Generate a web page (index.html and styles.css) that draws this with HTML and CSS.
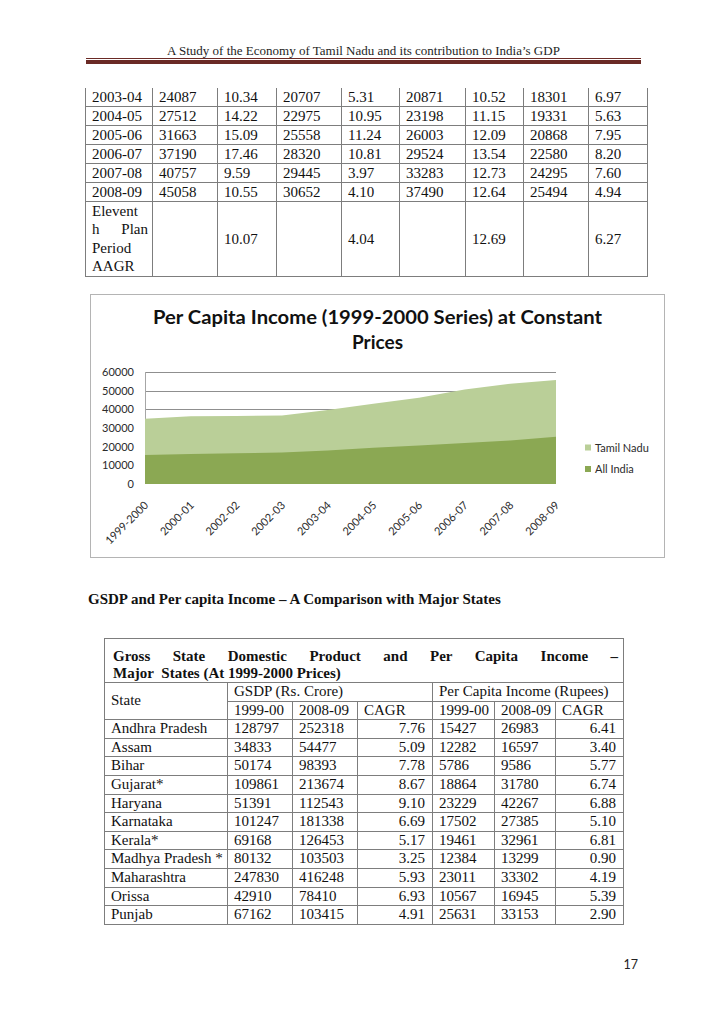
FILE: index.html
```html
<!DOCTYPE html>
<html lang="en">
<head>
<meta charset="utf-8">
<title>A Study of the Economy of Tamil Nadu - page 17</title>
<link rel="stylesheet" href="styles.css">
</head>
<body>
<div class="page">
  <header class="running-head">
    <div class="running-title">A Study of the Economy of Tamil Nadu and its contribution to India’s GDP</div>
    <div class="rule"></div>
  </header>

  <table class="growth">
    <colgroup>
      <col class="g1"><col class="g2"><col class="g3"><col class="g4"><col class="g5"><col class="g6"><col class="g7"><col class="g8"><col class="g9">
    </colgroup>
    <tbody>
      <tr><td>2003-04</td><td>24087</td><td>10.34</td><td>20707</td><td>5.31</td><td>20871</td><td>10.52</td><td>18301</td><td>6.97</td></tr>
      <tr><td>2004-05</td><td>27512</td><td>14.22</td><td>22975</td><td>10.95</td><td>23198</td><td>11.15</td><td>19331</td><td>5.63</td></tr>
      <tr><td>2005-06</td><td>31663</td><td>15.09</td><td>25558</td><td>11.24</td><td>26003</td><td>12.09</td><td>20868</td><td>7.95</td></tr>
      <tr><td>2006-07</td><td>37190</td><td>17.46</td><td>28320</td><td>10.81</td><td>29524</td><td>13.54</td><td>22580</td><td>8.20</td></tr>
      <tr><td>2007-08</td><td>40757</td><td>9.59</td><td>29445</td><td>3.97</td><td>33283</td><td>12.73</td><td>24295</td><td>7.60</td></tr>
      <tr><td>2008-09</td><td>45058</td><td>10.55</td><td>30652</td><td>4.10</td><td>37490</td><td>12.64</td><td>25494</td><td>4.94</td></tr>
      <tr class="plan-row">
        <td class="plan-label"><span class="pl">Elevent</span><span class="pl pl-just">h Plan</span><span class="pl">Period</span><span class="pl">AAGR</span></td>
        <td></td><td>10.07</td><td></td><td>4.04</td><td></td><td>12.69</td><td></td><td>6.27</td>
      </tr>
    </tbody>
  </table>

  <figure class="chart">
    <svg class="chart-svg" width="575" height="264" viewBox="0 0 575 264" xmlns="http://www.w3.org/2000/svg">
      <rect x="0.5" y="0.5" width="574" height="263" fill="#ffffff" stroke="#b4b4b4" stroke-width="1"/>
      <text class="c-title" x="287.5" y="30.3" text-anchor="middle" textLength="449" lengthAdjust="spacingAndGlyphs">Per Capita Income (1999-2000 Series) at Constant</text>
      <text class="c-title" x="287.5" y="55.3" text-anchor="middle">Prices</text>

      <g stroke="#8f8f8f" stroke-width="1">
        <line x1="55" y1="78.5" x2="466" y2="78.5"/>
        <line x1="55" y1="97.5" x2="466" y2="97.5"/>
        <line x1="55" y1="115.5" x2="466" y2="115.5"/>
        <line x1="55" y1="134.5" x2="466" y2="134.5"/>
        <line x1="55" y1="152.5" x2="466" y2="152.5"/>
        <line x1="55" y1="171.5" x2="466" y2="171.5"/>
      </g>
      <line x1="55.5" y1="78" x2="55.5" y2="190" stroke="#a6a6a6" stroke-width="1"/>

      <polygon fill="#bacf98" points="55,190 55,124.7 100.7,122.2 146.3,121.9 192,121.5 237.7,115.9 283.3,109.7 329,103.8 374.7,95.4 420.3,89.8 466,86 466,190"/>
      <polygon fill="#8ba853" points="55,190 55,161.1 100.7,160.1 146.3,159.2 192,158.5 237.7,156.4 283.3,153.8 329,151.5 374.7,148.9 420.3,146.5 466,142.8 466,190"/>

      <g class="c-axis" text-anchor="end">
        <text x="44" y="82">60000</text>
        <text x="44" y="100.7">50000</text>
        <text x="44" y="119.3">40000</text>
        <text x="44" y="138">30000</text>
        <text x="44" y="156.7">20000</text>
        <text x="44" y="175.3">10000</text>
        <text x="44" y="194">0</text>
      </g>

      <g class="c-axis" text-anchor="end">
        <text transform="translate(59,212) rotate(-45)">1999-2000</text>
        <text transform="translate(104.7,212) rotate(-45)">2000-01</text>
        <text transform="translate(150.3,212) rotate(-45)">2002-02</text>
        <text transform="translate(196,212) rotate(-45)">2002-03</text>
        <text transform="translate(241.7,212) rotate(-45)">2003-04</text>
        <text transform="translate(287.3,212) rotate(-45)">2004-05</text>
        <text transform="translate(333,212) rotate(-45)">2005-06</text>
        <text transform="translate(378.7,212) rotate(-45)">2006-07</text>
        <text transform="translate(424.3,212) rotate(-45)">2007-08</text>
        <text transform="translate(470,212) rotate(-45)">2008-09</text>
      </g>

      <rect x="495" y="150.5" width="6" height="6" fill="#bacf98"/>
      <text class="c-axis" x="505" y="157.6">Tamil Nadu</text>
      <rect x="495" y="172" width="6" height="6" fill="#8ba853"/>
      <text class="c-axis" x="505" y="179">All India</text>
    </svg>
  </figure>

  <h2 class="section-title">GSDP and Per capita Income – A Comparison with Major States</h2>

  <table class="states">
    <colgroup>
      <col class="s1"><col class="s2"><col class="s3"><col class="s4"><col class="s5"><col class="s6"><col class="s7">
    </colgroup>
    <tbody>
      <tr>
        <th colspan="7" class="caption-cell">
          <span class="cap-line1">Gross State Domestic Product and Per Capita Income –</span>
          <span class="cap-line2">Major&nbsp; States (At 1999-2000 Prices)</span>
        </th>
      </tr>
      <tr><td rowspan="2" class="mid">State</td><td colspan="3">GSDP (Rs. Crore)</td><td colspan="3">Per Capita Income (Rupees)</td></tr>
      <tr><td>1999-00</td><td>2008-09</td><td>CAGR</td><td>1999-00</td><td>2008-09</td><td>CAGR</td></tr>
      <tr><td>Andhra Pradesh</td><td>128797</td><td>252318</td><td class="num">7.76</td><td>15427</td><td>26983</td><td class="num">6.41</td></tr>
      <tr><td>Assam</td><td>34833</td><td>54477</td><td class="num">5.09</td><td>12282</td><td>16597</td><td class="num">3.40</td></tr>
      <tr><td>Bihar</td><td>50174</td><td>98393</td><td class="num">7.78</td><td>5786</td><td>9586</td><td class="num">5.77</td></tr>
      <tr><td>Gujarat*</td><td>109861</td><td>213674</td><td class="num">8.67</td><td>18864</td><td>31780</td><td class="num">6.74</td></tr>
      <tr><td>Haryana</td><td>51391</td><td>112543</td><td class="num">9.10</td><td>23229</td><td>42267</td><td class="num">6.88</td></tr>
      <tr><td>Karnataka</td><td>101247</td><td>181338</td><td class="num">6.69</td><td>17502</td><td>27385</td><td class="num">5.10</td></tr>
      <tr><td>Kerala*</td><td>69168</td><td>126453</td><td class="num">5.17</td><td>19461</td><td>32961</td><td class="num">6.81</td></tr>
      <tr><td>Madhya Pradesh *</td><td>80132</td><td>103503</td><td class="num">3.25</td><td>12384</td><td>13299</td><td class="num">0.90</td></tr>
      <tr><td>Maharashtra</td><td>247830</td><td>416248</td><td class="num">5.93</td><td>23011</td><td>33302</td><td class="num">4.19</td></tr>
      <tr><td>Orissa</td><td>42910</td><td>78410</td><td class="num">6.93</td><td>10567</td><td>16945</td><td class="num">5.39</td></tr>
      <tr><td>Punjab</td><td>67162</td><td>103415</td><td class="num">4.91</td><td>25631</td><td>33153</td><td class="num">2.90</td></tr>
    </tbody>
  </table>

  <footer class="page-foot"><span class="page-num">17</span></footer>
</div>
</body>
</html>
```

FILE: styles.css
```css
html, body {
  margin: 0;
  padding: 0;
  background: #ffffff;
}

body {
  font-family: "Liberation Serif", "Times New Roman", serif;
  color: #111111;
}

.page {
  width: 728px;
  height: 1031px;
  box-sizing: border-box;
  padding-top: 43px;
  display: flex;
  flex-direction: column;
  align-items: flex-start;
  overflow: hidden;
}

/* running header */
.running-head {
  width: 555px;
  margin-left: 86px;
}

.running-title {
  font-family: "Liberation Serif", "Times New Roman", serif;
  font-size: 13px;
  line-height: 15px;
  height: 15px;
  text-align: center;
  color: #1e1e1e;
  white-space: nowrap;
}

.rule {
  border-top: 1px solid #6a2a25;
  padding-top: 1px;
}

.rule::after {
  content: "";
  display: block;
  height: 4px;
  background: #6a2a25;
}

/* top growth table */
.growth {
  margin-top: 24px;
  margin-left: 85px;
  border-collapse: collapse;
  table-layout: fixed;
  width: 562px;
  font-size: 15px;
}

.growth td {
  border: 1px solid #7d7d7d;
  padding: 0 4px 0 6px;
  line-height: 18px;
  height: 18px;
  white-space: nowrap;
  vertical-align: middle;
}

.growth tr:first-child td {
  border-top: none;
}

.g1 { width: 67px; }
.g2 { width: 65px; }
.g3 { width: 59px; }
.g4 { width: 65px; }
.g5 { width: 58px; }
.g6 { width: 66px; }
.g7 { width: 58px; }
.g8 { width: 65px; }
.g9 { width: 59px; }

.growth .plan-label {
  padding-top: 0;
  padding-bottom: 1px;
  white-space: normal;
}

.pl {
  display: block;
  line-height: 18.25px;
}

.pl-just {
  text-align: justify;
  text-align-last: justify;
}

/* chart */
.chart {
  margin: 17px 0 0 90px;
  padding: 0;
  width: 575px;
  height: 264px;
}

.chart-svg {
  display: block;
}

.c-title {
  font-family: "Lato", "Open Sans", sans-serif;
  font-weight: 700;
  font-size: 19px;
  fill: #111111;
}

.c-axis {
  font-family: "Lato", "Open Sans", sans-serif;
  font-size: 11px;
  fill: #2b2b2b;
}

/* section heading */
.section-title {
  margin: 32px 0 0 88px;
  font-family: "Liberation Serif", "Times New Roman", serif;
  font-size: 15px;
  line-height: 18px;
  font-weight: 700;
  color: #111111;
}

/* states table */
.states {
  margin-top: 30px;
  margin-left: 104px;
  border-collapse: collapse;
  table-layout: fixed;
  width: 519px;
  font-size: 15px;
}

.s1 { width: 123px; }
.s2 { width: 65px; }
.s3 { width: 65px; }
.s4 { width: 75px; }
.s5 { width: 62px; }
.s6 { width: 61px; }
.s7 { width: 68px; }

.states td,
.states th {
  border: 1px solid #7d7d7d;
  padding: 0 6px;
  line-height: 17.6px;
  height: 17.6px;
  white-space: nowrap;
  text-align: left;
  font-weight: 400;
  vertical-align: middle;
}

.states .caption-cell {
  padding: 9px 5px 0 8px;
  font-weight: 700;
  white-space: normal;
  line-height: 17px;
}

.cap-line1 {
  display: block;
  text-align: justify;
  text-align-last: justify;
}

.cap-line2 {
  display: block;
  white-space: nowrap;
}

.states td.num {
  text-align: right;
  padding-right: 7px;
}

/* footer */
.page-foot {
  width: 638px;
  margin-top: 32px;
  display: flex;
  justify-content: flex-end;
}

.page-num {
  font-family: "Lato", "Open Sans", sans-serif;
  font-size: 12.5px;
  line-height: 16px;
  color: #222222;
}
```
